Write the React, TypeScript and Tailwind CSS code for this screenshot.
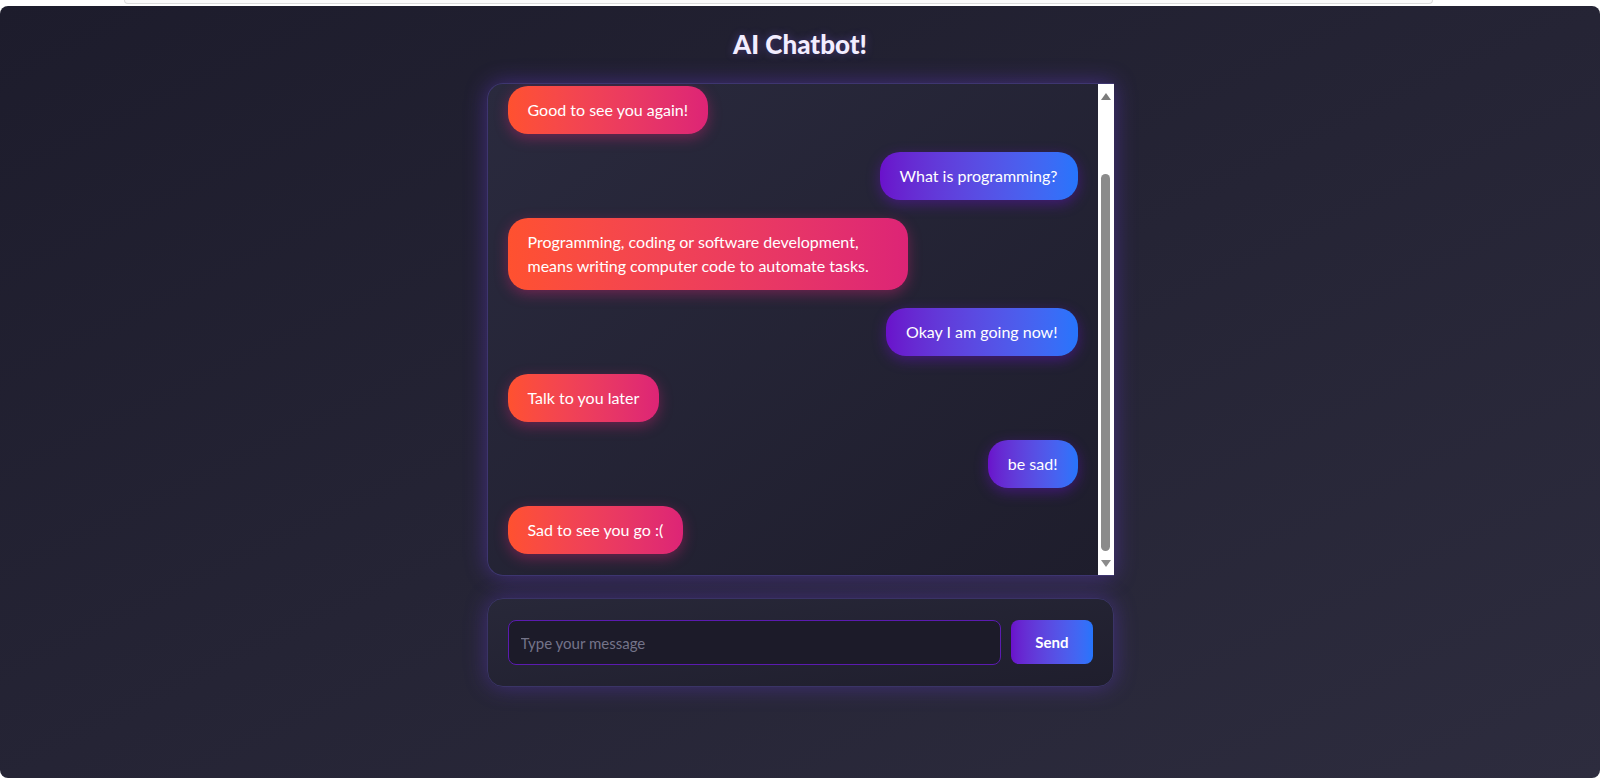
import { useState } from 'react'

type Message = { from: 'bot' | 'user'; text: string }

const messages: Message[] = [
  { from: 'bot', text: 'Good to see you again!' },
  { from: 'user', text: 'What is programming?' },
  { from: 'bot', text: 'Programming, coding or software development, means writing computer code to automate tasks.' },
  { from: 'user', text: 'Okay I am going now!' },
  { from: 'bot', text: 'Talk to you later' },
  { from: 'user', text: 'be sad!' },
  { from: 'bot', text: 'Sad to see you go :(' },
]

function Bubble({ msg }: { msg: Message }) {
  const isUser = msg.from === 'user'
  return (
    <div className={isUser ? 'flex justify-end' : 'flex justify-start'}>
      <div
        className={
          isUser
            ? 'max-w-[400px] rounded-[20px] bg-gradient-to-r from-[#6a11cb] to-[#2575fc] px-5 py-3 text-[16px] leading-6 text-white shadow-[0_4px_14px_rgba(106,17,203,0.45)]'
            : 'max-w-[400px] rounded-[20px] bg-gradient-to-r from-[#ff512f] to-[#dd2476] px-5 py-3 text-[16px] leading-6 text-white shadow-[0_4px_14px_rgba(221,36,118,0.4)]'
        }
      >
        {msg.text}
      </div>
    </div>
  )
}

// fake classic scrollbar, the list is scrolled to the bottom
function Scrollbar() {
  return (
    <div className="flex w-4 shrink-0 flex-col items-center bg-white pt-[9px] pb-[8px]">
      <div className="h-0 w-0 border-x-[5px] border-b-[7px] border-x-transparent border-b-[#7c7c7c]" />
      <div className="flex w-full flex-1 flex-col items-center pt-[74px] pb-[9px]">
        <div className="w-[9px] flex-1 rounded-full bg-[#8b8b8b]" />
      </div>
      <div className="h-0 w-0 border-x-[5px] border-t-[7px] border-x-transparent border-t-[#8b8b8b]" />
    </div>
  )
}

export default function App() {
  const [value, setValue] = useState('')

  return (
    <div
      className="flex h-[783px] w-full flex-col overflow-hidden bg-white"
      style={{ fontFamily: 'Lato, "Open Sans", sans-serif' }}
    >
      {/* bottom of the bar above the page */}
      <div className="h-[6px] px-[124px]">
        <div className="h-[4px] w-[1309px] rounded-b-md border-x border-b border-[#dcdcdc] bg-[#fafafa]" />
      </div>

      <div className="flex h-[772px] flex-col items-center rounded-lg bg-gradient-to-br from-[#1d1c2c] to-[#2d2c3e] pt-[22px]">
        <h1 className="text-[26px] font-black leading-8 text-[#f2edff] [text-shadow:0_0_8px_rgba(140,100,255,0.35)]">
          AI Chatbot!
        </h1>

        {/* messages */}
        <div className="mt-[23px] flex h-[493px] w-[627px] overflow-hidden rounded-l-2xl border border-r-0 border-[#3e3670] bg-gradient-to-br from-[#2a2a3e] to-[#1e1d2c] shadow-[0_0_22px_rgba(106,60,220,0.45)]">
          <div className="flex flex-1 flex-col justify-end gap-[18px] overflow-hidden pt-3 pb-[21px] pl-5 pr-5">
            {messages.map((m, i) => (
              <Bubble key={i} msg={m} />
            ))}
          </div>
          <Scrollbar />
        </div>

        {/* input */}
        <form
          className="mt-[22px] flex w-[627px] gap-[10px] rounded-2xl border border-[#3a3466] bg-gradient-to-br from-[#282839] to-[#1f1e2d] px-5 py-[21px] shadow-[0_0_22px_rgba(106,60,220,0.4)]"
          onSubmit={(e) => {
            e.preventDefault()
            setValue('')
          }}
        >
          <input
            value={value}
            onChange={(e) => setValue(e.target.value)}
            placeholder="Type your message"
            className="h-[45px] flex-1 rounded-lg border border-[#5b1bb0] bg-[#1c1b29] px-3 text-[15px] text-white outline-none placeholder:text-[#74748a]"
          />
          <button
            type="submit"
            className="h-[44px] rounded-lg bg-gradient-to-r from-[#6a11cb] to-[#2575fc] px-6 text-[15px] font-bold text-white"
          >
            Send
          </button>
        </form>
      </div>
    </div>
  )
}
